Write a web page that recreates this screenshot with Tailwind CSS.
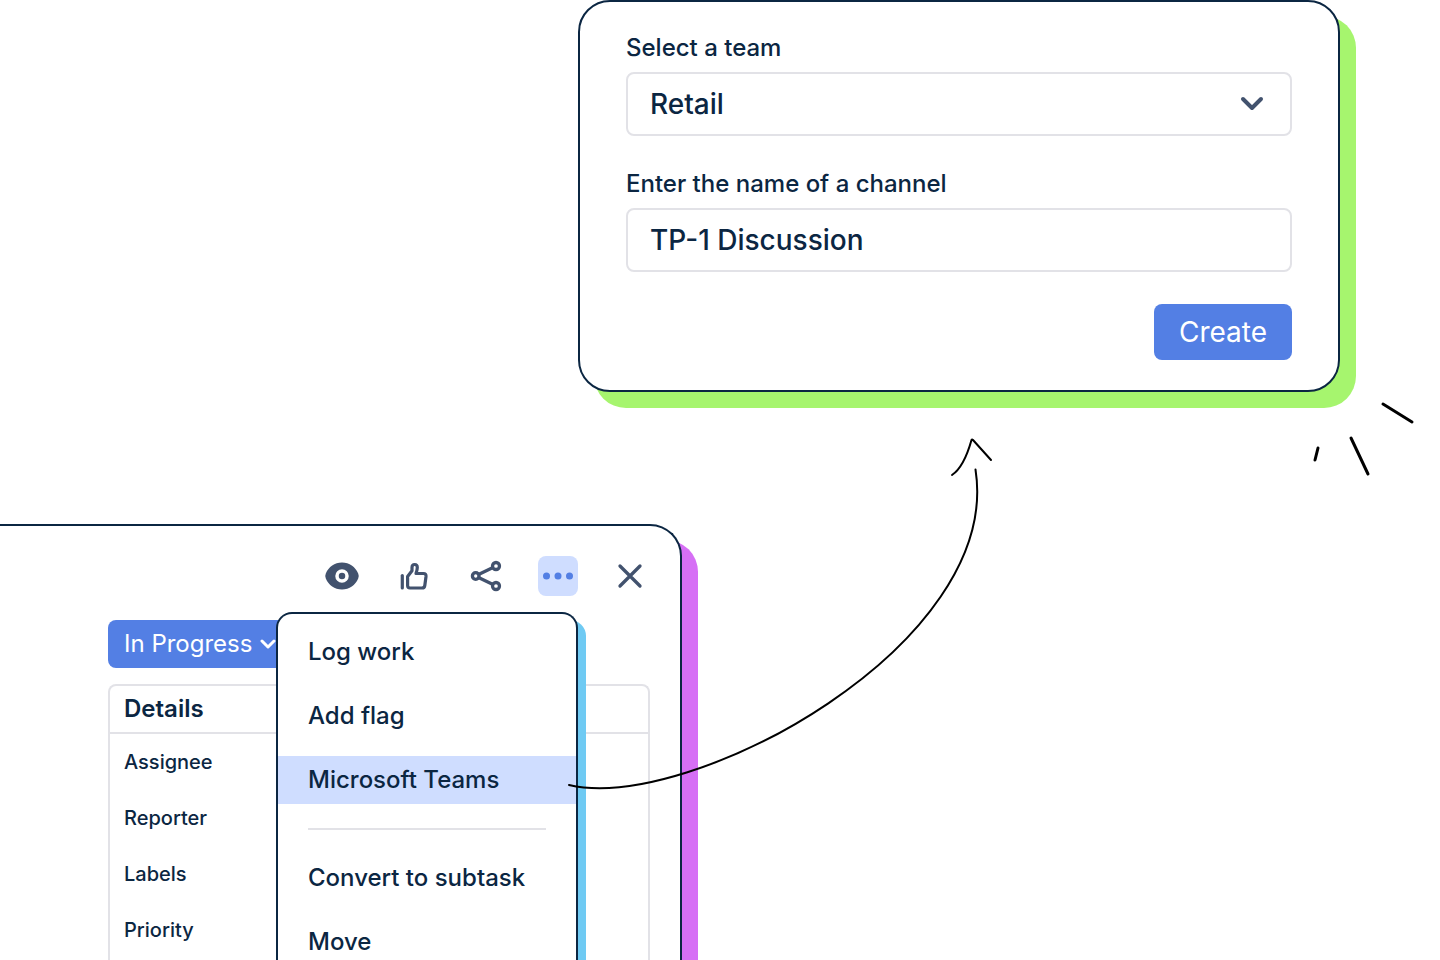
<!DOCTYPE html>
<html lang="en">
<head>
    <meta charset="UTF-8">
    <meta name="viewport" content="width=device-width, initial-scale=1.0">
    <title>Create a channel</title>

    <script src="https://cdn.jsdelivr.net/npm/@tailwindcss/browser@4"></script>
</head>
<body class="bg-white font-['Inter','Liberation_Sans',sans-serif] text-[#0b2642]">

    <main class="relative flex min-h-screen flex-col overflow-hidden">

        <!-- Channel form -->
        <div class="flex justify-end pr-[100px]">
            <form class="w-full max-w-[762px] rounded-[32px] border-2 border-[#0b2642] bg-white px-[46px] py-[30px] shadow-[16px_16px_0_#a6f56e]">
                <label for="team" class="block text-2xl leading-8 font-medium">Select a team</label>
                <div class="relative mt-2">
                    <select id="team" class="h-16 w-full appearance-none rounded-lg border-2 border-[#e2e2e7] bg-white px-[22px] text-[28px] font-medium">
                        <option>Retail</option>
                    </select>
                    <svg class="pointer-events-none absolute top-5 right-7 h-6 w-6" viewBox="0 0 24 24" fill="none" stroke="#42526e" stroke-width="4" stroke-linecap="round" stroke-linejoin="round">
                        <path d="M3 7l9 9 9-9" />
                    </svg>
                </div>
                <label for="channel" class="mt-8 block text-2xl leading-8 font-medium">Enter the name of a channel</label>
                <input id="channel" type="text" value="TP-1 Discussion" class="mt-2 h-16 w-full rounded-lg border-2 border-[#e2e2e7] bg-white px-[22px] text-[28px] font-medium">
                <div class="mt-8 flex justify-end">
                    <button type="button" class="h-14 rounded-lg bg-[#537fe4] px-[25px] text-[28px] text-white">Create</button>
                </div>
            </form>
        </div>

        <!-- Issue panel -->
        <section class="relative mt-[132px] flex w-full max-w-[682px] flex-1 flex-col rounded-tr-[32px] border-t-2 border-r-2 border-[#0b2642] bg-white pt-[30px] pr-[30px] pl-[108px] shadow-[16px_16px_0_#d66ff5]">
            <div class="flex justify-end gap-8 text-[#42526e]">
                <button type="button" aria-label="Watch" class="h-10 w-10">
                    <svg class="h-10 w-10" viewBox="0 0 40 40">
                        <path d="M20 6.500C27.500 6.500 33.300 10.800 36.200 17.500Q37.300 20 36.200 22.500C33.300 29.200 27.500 33.500 20 33.500S6.700 29.200 3.800 22.500Q2.700 20 3.800 17.500C6.700 10.800 12.500 6.500 20 6.500Z" fill="currentColor" />
                        <circle cx="20" cy="20" r="5" fill="currentColor" stroke="#fff" stroke-width="3.500" />
                    </svg>
                </button>
                <button type="button" aria-label="Like" class="h-10 w-10">
                    <svg class="h-10 w-10" viewBox="0 0 40 40" fill="none" stroke="currentColor" stroke-width="3.200" stroke-linecap="round" stroke-linejoin="round">
                        <path d="M8.300 19.500v12.500" />
                        <path d="M13.600 20.500 18 14.800V11.500C18 7.500 23.300 7.500 23.300 11.500 23.300 13.700 22.600 15.800 22 17.500H29.500Q32.300 17.500 32 20.500L30.800 29.500Q30.500 32 28 32H16Q13.600 32 13.600 29.500Z" />
                    </svg>
                </button>
                <button type="button" aria-label="Share" class="h-10 w-10">
                    <svg class="h-10 w-10" viewBox="0 0 40 40" fill="none" stroke="currentColor" stroke-width="3.300">
                        <circle cx="9.700" cy="20" r="3.300" />
                        <circle cx="30" cy="10" r="3.500" />
                        <circle cx="30" cy="30" r="3.500" />
                        <path d="M12.500 18.500 27 11.500M12.500 21.500 27 28.500" />
                    </svg>
                </button>
                <button type="button" aria-label="More actions" class="h-10 w-10 rounded-lg bg-[#cfddff]">
                    <svg class="h-10 w-10" viewBox="0 0 40 40" fill="#537fe4">
                        <circle cx="8.500" cy="20" r="3.500" />
                        <circle cx="20" cy="20" r="3.500" />
                        <circle cx="31.500" cy="20" r="3.500" />
                    </svg>
                </button>
                <button type="button" aria-label="Close" class="h-10 w-10">
                    <svg class="h-10 w-10" viewBox="0 0 40 40" fill="none" stroke="currentColor" stroke-width="3.300" stroke-linecap="round">
                        <path d="M10 10l20 20M30 10 10 30" />
                    </svg>
                </button>
            </div>

            <button type="button" class="mt-6 flex h-12 items-center gap-2 self-start rounded-lg bg-[#537fe4] px-4 text-2xl text-white">
                In Progress
                <svg class="h-5 w-5" viewBox="0 0 20 20" fill="none" stroke="currentColor" stroke-width="3" stroke-linecap="round" stroke-linejoin="round">
                    <path d="M2 7l6 6 6-6" />
                </svg>
            </button>

            <div class="mt-4 flex-1 rounded-t-lg border-2 border-b-0 border-[#e2e2e7]">
                <h2 class="flex h-12 items-center border-b-2 border-[#e2e2e7] px-[14px] text-2xl font-semibold">Details</h2>
                <ul class="px-[14px] text-xl font-medium">
                    <li class="flex h-14 items-center">Assignee</li>
                    <li class="flex h-14 items-center">Reporter</li>
                    <li class="flex h-14 items-center">Labels</li>
                    <li class="flex h-14 items-center">Priority</li>
                </ul>
            </div>

            <!-- Actions menu -->
            <div class="absolute top-[86px] right-[102px] bottom-0 flex w-[302px] flex-col overflow-hidden rounded-t-2xl border-2 border-b-0 border-[#0b2642] bg-white pt-[14px] text-2xl font-medium shadow-[8px_8px_0_#6fcaf3]">
                <button type="button" class="h-12 shrink-0 px-[30px] text-left">Log work</button>
                <button type="button" class="mt-4 h-12 shrink-0 px-[30px] text-left">Add flag</button>
                <button type="button" class="mt-4 h-12 shrink-0 bg-[#cfddff] px-[30px] text-left">Microsoft Teams</button>
                <hr class="mx-[30px] my-6 border-t-2 border-[#e2e2e7]">
                <button type="button" class="h-12 shrink-0 px-[30px] text-left">Convert to subtask</button>
                <button type="button" class="mt-4 h-12 shrink-0 px-[30px] text-left">Move</button>
            </div>
        </section>

        <!-- Hand-drawn arrow and sparks -->
        <svg class="pointer-events-none absolute top-0 left-0 h-[960px] w-[1440px] max-w-none" viewBox="0 0 1440 960" fill="none" stroke="#000" stroke-linecap="round" stroke-linejoin="round">
            <path d="M569 785C690 813 1003 645 975.500 469.500" stroke-width="2" />
            <path d="M952 475C961 469 967 456 971.500 440Q972 439 973 440L991 460" stroke-width="2" />
            <path d="M1318 448L1315 460M1351 438L1368 474M1383 404L1412 422" stroke-width="3" />
        </svg>
    </main>
</body>
</html>
